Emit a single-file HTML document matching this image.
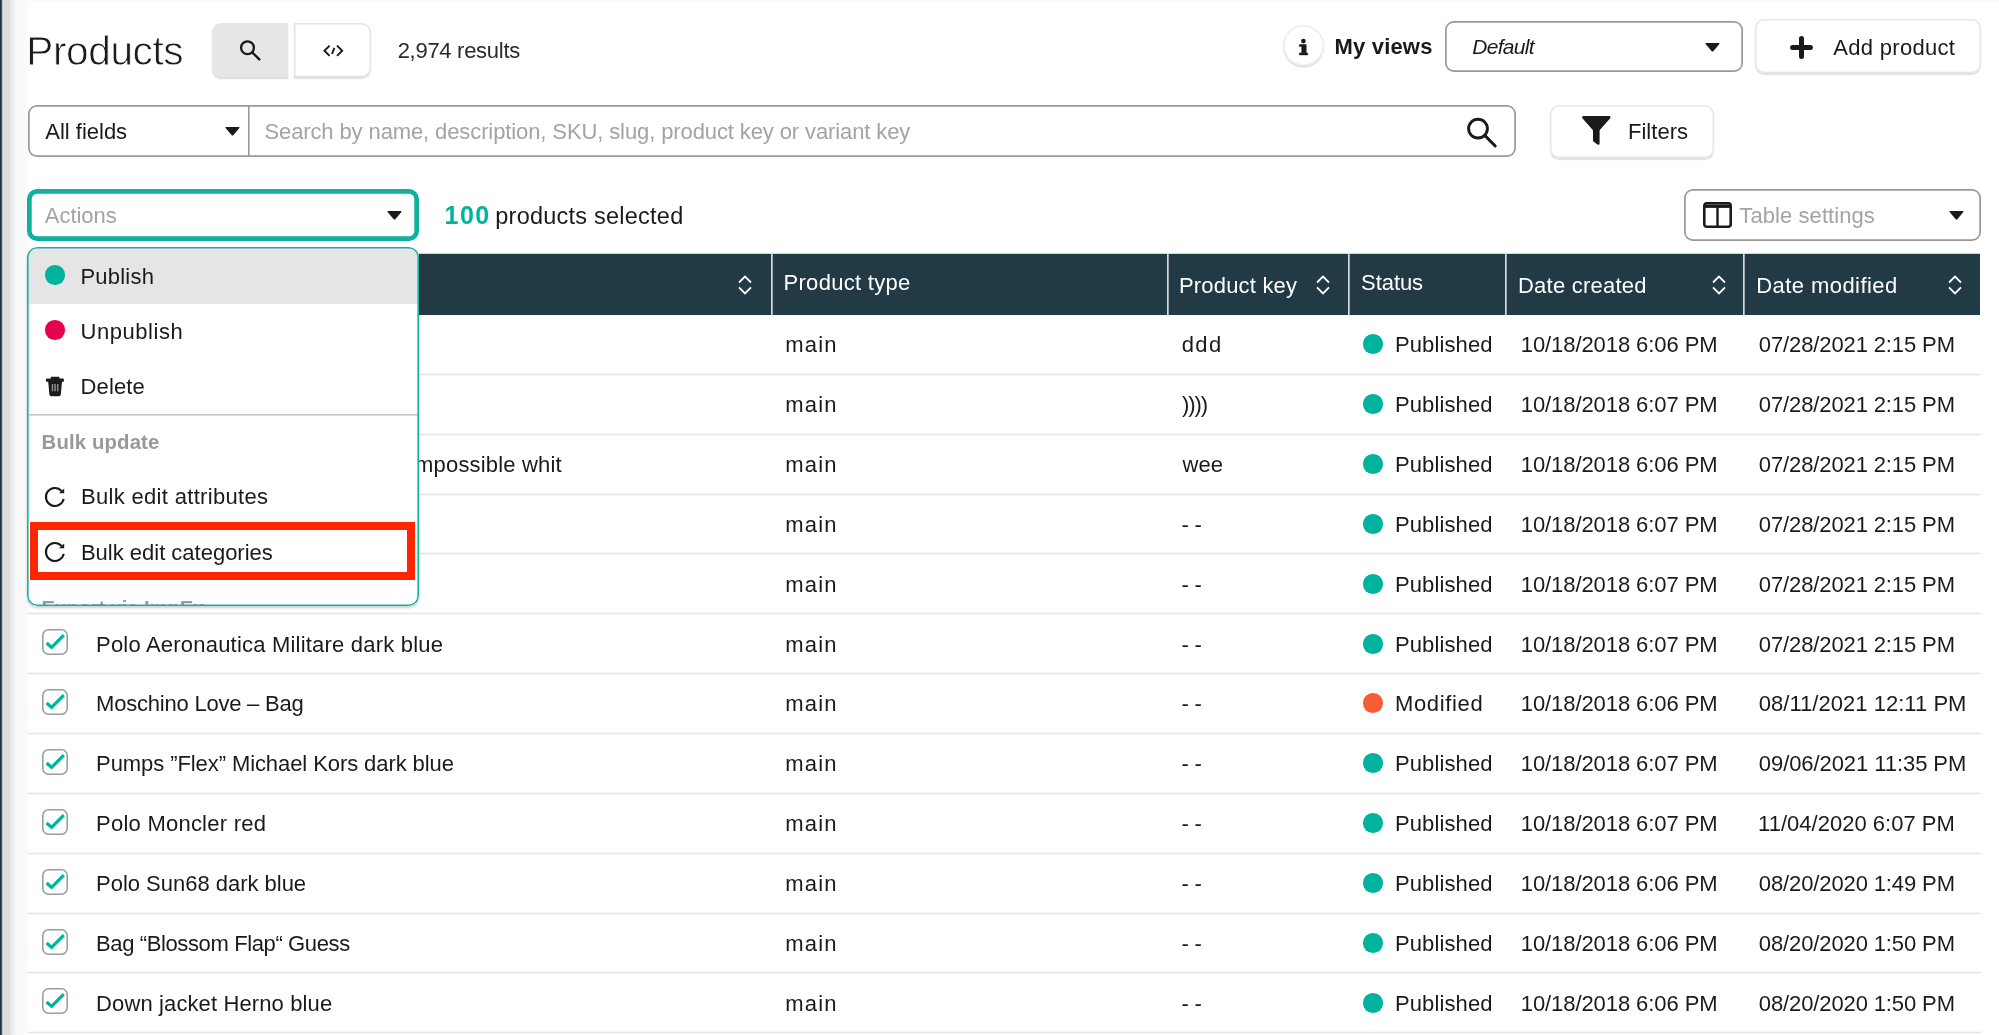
<!DOCTYPE html><html lang="en"><head><meta charset="utf-8"><title>Products</title><style>
*{box-sizing:border-box;margin:0;padding:0}
html,body{width:1999px;height:1035px;overflow:hidden;background:#fff}
body{position:relative;font-family:"Liberation Sans",sans-serif;color:#1a1a1a;font-size:22px}
div,nav,i,b{position:absolute;display:block}
#app{left:0;top:0;width:1999px;height:1035px;will-change:transform}
.t{position:absolute;white-space:nowrap;line-height:1;display:block;font-size:22px;font-weight:normal}
svg{position:absolute;overflow:visible}
.edge{left:0;top:0;width:30px;height:1035px;background:linear-gradient(90deg,#dcdcdc 0,#dddddd 9.5px,#e8e9e9 10.5px,#e9eaea 12.5px,#f2f2f2 13.5px,#f3f4f4 15.5px,#f9f9f9 16.5px,#fafafa 27px,#fff 29.5px)}
.edge:before{content:"";position:absolute;left:0;top:0;width:1px;height:100%;background:#1b3543;box-shadow:.75px 0 0 #1b3543,1.6px 0 0 #a9b2b6}
.topline{left:28px;top:0;right:0;height:1px;background:#fafafa}
.btn{background:#fff;border-radius:9px;box-shadow:inset 0 0 0 1.5px #e6e7e7,0 1.2px 1.2px rgba(0,0,0,.12)}
.sel{background:#fff;border-radius:9px;box-shadow:inset 0 0 0 1.7px #999}
.gray{color:#a3a3a3}
.b{font-weight:bold}
.i{font-style:italic}
.teal{color:#00b39e}
.w{color:#fff}
.thead{left:28px;top:254px;width:1952px;height:61px;background:#213a45;box-shadow:0 -.2px 0 #213a45}
.vsep{top:254px;width:1px;height:61px;background:#d3d8da;box-shadow:.7px 0 0 #d3d8da}
.hsep{left:27px;width:1954px;height:3px;background:#e5e7e7;border-top:1px solid #f6f7f7;border-bottom:1px solid #f6f7f7}
.cb{width:26px;height:26px;border-radius:6.5px;background:#fff;box-shadow:inset 0 0 0 1.6px #9d9d9d}
.dot{width:19.6px;height:19.6px;border-radius:50%}
.menu{left:27px;top:247px;width:392px;height:359px;background:#fff;border-radius:10px;box-shadow:0 2px 3px rgba(0,0,0,.2);overflow:hidden}
.menu>*{margin-left:-27px;margin-top:-247px}
.menu>.frame{margin:0;left:0;top:0;width:100%;height:100%;border-radius:10px;box-shadow:inset 0 0 0 1.6px #14b3a0}
</style></head><body>
<div id="app">
<div class="edge"></div><div class="topline"></div>
<header>
<h1 class="t" id="title" style="left:26.25px;top:31px;font-size:40.6px;letter-spacing:-0.390px;-webkit-text-stroke:.8px #fff;">Products</h1>
<div style="left:212px;top:23px;width:76px;height:54px;background:#e6e6e6;border-radius:9px 0 0 9px;box-shadow:0 1.5px 1.5px rgba(0,0,0,.14)"></div>
<svg style="left:236px;top:36px" width="28" height="28" viewBox="236 36 28 28"><circle cx="247.5" cy="47.7" r="6.4" fill="none" stroke="#1a1a1a" stroke-width="2.3"/><path d="M252.2 52.4L259.3 59.4" stroke="#1a1a1a" stroke-width="2.4" stroke-linecap="round"/></svg>
<div style="left:294px;top:23px;width:77px;height:54px;background:#fff;border-radius:0 9px 9px 0;box-shadow:inset 0 0 0 1.5px #e4e4e4,0 1.5px 1.5px rgba(0,0,0,.13)"></div>
<svg style="left:320px;top:40px" width="26" height="22" viewBox="320 40 26 22"><path d="M329.6 45.6L324.4 50.7L329.6 55.9M337 45.6L342.2 50.7L337 55.9M334.4 47.8L332 54" fill="none" stroke="#1a1a1a" stroke-width="1.9"/></svg>
<span class="t" id="results" style="left:397.66px;top:40px;letter-spacing:-0.284px;color:#2a2a2a">2,974 results</span>
<div style="left:1283px;top:25px;width:41px;height:41px;border-radius:50%;background:#fff;box-shadow:inset 0 0 0 1.5px #ebecec,0 1.2px 1.5px rgba(0,0,0,.18)"></div>
<svg style="left:1296px;top:36px" width="15" height="21" viewBox="1296 36 15 21" role="img" aria-label="i"><circle cx="1303.4" cy="41.1" r="2.35" fill="#1a1a1a"/><path d="M1299.4 44.5H1306.2V52.9H1307.7V54.9H1299.4V52.9H1301.7V46.4H1299.4Z" fill="#1a1a1a" stroke="#1a1a1a" stroke-width=".5" stroke-linejoin="round"/></svg>
<span class="t b" id="myviews" style="left:1334.54px;top:36px;letter-spacing:0.179px;">My views</span>
<div class="sel" style="left:1445px;top:21px;width:298px;height:51px;"></div>
<span class="t i" id="default" style="left:1472.37px;top:36px;font-size:21px;letter-spacing:-0.737px;">Default</span>
<svg style="left:1704.8px;top:43.2px" width="15" height="9" viewBox="0 0 15 9"><path d="M1.2 0H13.8Q15.3 0 14.2 1.2L8.3 8.2Q7.5 9 6.7 8.2L0.8 1.2Q-0.3 0 1.2 0Z" fill="#1a1a1a"/></svg>
<div class="btn" style="left:1755px;top:19px;width:226px;height:54px;"></div>
<svg style="left:1790.4px;top:35.6px" width="23" height="23" viewBox="0 0 23 23"><path d="M11.5 2.6V20.4M2.6 11.5H20.4" stroke="#1a1a1a" stroke-width="5" stroke-linecap="round"/></svg>
<span class="t" id="addproduct" style="left:1833.32px;top:37px;letter-spacing:0.292px;">Add product</span>
</header>
<section>
<div class="sel" style="left:28px;top:105px;width:1488px;height:51.5px;"></div>
<div style="left:248px;top:105px;width:1px;height:51.5px;background:#999;box-shadow:.6px 0 0 #999"></div>
<span class="t" id="allfields" style="left:45.32px;top:121px;letter-spacing:-0.015px;">All fields</span>
<svg style="left:225px;top:127.2px" width="15" height="9" viewBox="0 0 15 9"><path d="M1.2 0H13.8Q15.3 0 14.2 1.2L8.3 8.2Q7.5 9 6.7 8.2L0.8 1.2Q-0.3 0 1.2 0Z" fill="#1a1a1a"/></svg>
<span class="t gray" id="placeholder" style="left:264.44px;top:121px;letter-spacing:-0.109px;">Search by name, description, SKU, slug, product key or variant key</span>
<svg style="left:1464px;top:114px" width="36" height="36" viewBox="1464 114 36 36"><circle cx="1478" cy="128.6" r="9.4" fill="none" stroke="#1a1a1a" stroke-width="2.9"/><path d="M1485 135.6L1495.2 146" stroke="#1a1a1a" stroke-width="3" stroke-linecap="round"/></svg>
<div class="btn" style="left:1550px;top:105px;width:164px;height:53px;"></div>
<svg style="left:1582px;top:116px" width="28.6" height="29" viewBox="0 0 28.6 29"><path d="M1.6 0H27Q29.4 0.3 28 2.4L17.6 14.2V27.4Q17.4 29.6 15.4 28.4L11.4 25.4Q11 25 11 24.2V14.2L0.6 2.4Q-0.8 0.3 1.6 0Z" fill="#1a1a1a"/></svg>
<span class="t" id="filters" style="left:1627.94px;top:121px;letter-spacing:0.042px;">Filters</span>
</section>
<section>
<div style="left:27px;top:189px;width:392px;height:52px;border-radius:10px;background:#fff;box-shadow:inset 0 0 0 4.7px #0fb19c"></div>
<span class="t gray" id="actions" style="left:44.84px;top:205px;letter-spacing:-0.033px;">Actions</span>
<svg style="left:387.4px;top:211px" width="15" height="9" viewBox="0 0 15 9"><path d="M1.2 0H13.8Q15.3 0 14.2 1.2L8.3 8.2Q7.5 9 6.7 8.2L0.8 1.2Q-0.3 0 1.2 0Z" fill="#1a1a1a"/></svg>
<span class="t b teal" id="n100" style="left:444.60px;top:203px;font-size:25px;letter-spacing:1.407px;">100</span>
<span class="t" id="selected" style="left:495.31px;top:205px;font-size:23.5px;letter-spacing:0.234px;">products selected</span>
<div class="sel" style="left:1684px;top:189px;width:297px;height:52px;"></div>
<svg style="left:1703px;top:202.4px" width="29" height="26" viewBox="0 0 29 26"><rect x="1.3" y="1.3" width="26.4" height="23.4" rx="2.5" fill="none" stroke="#1a1a1a" stroke-width="2.6"/><path d="M1.3 4.2H27.7" stroke="#1a1a1a" stroke-width="3.4"/><path d="M14.5 3V24.7" stroke="#1a1a1a" stroke-width="2.4"/></svg>
<span class="t gray" id="tablesettings" style="left:1739.30px;top:205px;letter-spacing:0.080px;">Table settings</span>
<svg style="left:1949px;top:211.2px" width="15" height="9" viewBox="0 0 15 9"><path d="M1.2 0H13.8Q15.3 0 14.2 1.2L8.3 8.2Q7.5 9 6.7 8.2L0.8 1.2Q-0.3 0 1.2 0Z" fill="#1a1a1a"/></svg>
</section>
<main>
<div class="thead"></div>
<div class="vsep" style="left:770.5px"></div>
<div class="vsep" style="left:1166.5px"></div>
<div class="vsep" style="left:1347.5px"></div>
<div class="vsep" style="left:1505px"></div>
<div class="vsep" style="left:1742.5px"></div>
<div class="cb" style="left:42px;top:271px;width:26px;height:26px;"><svg style="left:3.6px;top:1.8px" width="20" height="18" viewBox="0 0 20 18"><path d="M0.6 12L5.6 16.4L17.8 4.2" fill="none" stroke="#00b39e" stroke-width="3.2"/></svg></div>
<span class="t w" id="h_name" style="left:95.54px;top:275px;letter-spacing:-0.277px;">Product name</span>
<svg style="left:736.4px;top:272.7px" width="18" height="24" viewBox="-9 -12 18 24"><path d="M-6 -2.5L0 -8.4L6 -2.5M-6 2.3L0 8.4L6 2.3" fill="none" stroke="#fff" stroke-width="1.8"/></svg>
<span class="t w" id="h_type" style="left:783.54px;top:272px;letter-spacing:0.294px;">Product type</span>
<span class="t w" id="h_key" style="left:1178.94px;top:275px;letter-spacing:0.192px;">Product key</span>
<svg style="left:1314.0px;top:272.7px" width="18" height="24" viewBox="-9 -12 18 24"><path d="M-6 -2.5L0 -8.4L6 -2.5M-6 2.3L0 8.4L6 2.3" fill="none" stroke="#fff" stroke-width="1.8"/></svg>
<span class="t w" id="h_status" style="left:1361.12px;top:272px;letter-spacing:-0.075px;">Status</span>
<span class="t w" id="h_created" style="left:1517.94px;top:275px;letter-spacing:0.244px;">Date created</span>
<svg style="left:1709.8px;top:272.7px" width="18" height="24" viewBox="-9 -12 18 24"><path d="M-6 -2.5L0 -8.4L6 -2.5M-6 2.3L0 8.4L6 2.3" fill="none" stroke="#fff" stroke-width="1.8"/></svg>
<span class="t w" id="h_modified" style="left:1756.30px;top:275px;letter-spacing:0.431px;">Date modified</span>
<svg style="left:1946.0px;top:272.7px" width="18" height="24" viewBox="-9 -12 18 24"><path d="M-6 -2.5L0 -8.4L6 -2.5M-6 2.3L0 8.4L6 2.3" fill="none" stroke="#fff" stroke-width="1.8"/></svg>
<div class="hsep" style="top:373px"></div>
<div class="cb" style="left:42px;top:330px;width:26px;height:26px;"><svg style="left:3.6px;top:1.8px" width="20" height="18" viewBox="0 0 20 18"><path d="M0.6 12L5.6 16.4L17.8 4.2" fill="none" stroke="#00b39e" stroke-width="3.2"/></svg></div>
<span class="t" id="name0" style="left:96.59px;top:334px;">Sweater Pinko white</span>
<span class="t" id="type0" style="left:785.30px;top:334px;letter-spacing:1.191px;">main</span>
<span class="t" id="key0" style="left:1181.67px;top:334px;letter-spacing:1.408px;">ddd</span>
<i class="dot" style="left:1363.4px;top:334.4px;background:#00b39e"></i>
<span class="t" id="stat0" style="left:1394.94px;top:334px;letter-spacing:0.125px;">Published</span>
<span class="t" id="dc0" style="left:1520.72px;top:334px;letter-spacing:-0.074px;">10/18/2018 6:06 PM</span>
<span class="t" id="dm0" style="left:1758.81px;top:334px;letter-spacing:-0.115px;">07/28/2021 2:15 PM</span>
<div class="hsep" style="top:433px"></div>
<div class="cb" style="left:42px;top:390px;width:26px;height:26px;"><svg style="left:3.6px;top:1.8px" width="20" height="18" viewBox="0 0 20 18"><path d="M0.6 12L5.6 16.4L17.8 4.2" fill="none" stroke="#00b39e" stroke-width="3.2"/></svg></div>
<span class="t" id="name1" style="left:96.59px;top:394px;">Sandals Aldo white</span>
<span class="t" id="type1" style="left:785.30px;top:394px;letter-spacing:1.191px;">main</span>
<span class="t" id="key1" style="left:1182.07px;top:394px;letter-spacing:-1.059px;">))))</span>
<i class="dot" style="left:1363.4px;top:394.4px;background:#00b39e"></i>
<span class="t" id="stat1" style="left:1394.94px;top:394px;letter-spacing:0.125px;">Published</span>
<span class="t" id="dc1" style="left:1520.72px;top:394px;letter-spacing:-0.074px;">10/18/2018 6:07 PM</span>
<span class="t" id="dm1" style="left:1758.81px;top:394px;letter-spacing:-0.115px;">07/28/2021 2:15 PM</span>
<div class="hsep" style="top:493px"></div>
<div class="cb" style="left:42px;top:450px;width:26px;height:26px;"><svg style="left:3.6px;top:1.8px" width="20" height="18" viewBox="0 0 20 18"><path d="M0.6 12L5.6 16.4L17.8 4.2" fill="none" stroke="#00b39e" stroke-width="3.2"/></svg></div>
<span class="t" id="name2" style="right:1437.23px;top:454px;letter-spacing:0.172px">Sneakers Mission Impossible whit</span>
<span class="t" id="type2" style="left:785.30px;top:454px;letter-spacing:1.191px;">main</span>
<span class="t" id="key2" style="left:1182.40px;top:454px;letter-spacing:0.112px;">wee</span>
<i class="dot" style="left:1363.4px;top:454.4px;background:#00b39e"></i>
<span class="t" id="stat2" style="left:1394.94px;top:454px;letter-spacing:0.125px;">Published</span>
<span class="t" id="dc2" style="left:1520.72px;top:454px;letter-spacing:-0.074px;">10/18/2018 6:06 PM</span>
<span class="t" id="dm2" style="left:1758.81px;top:454px;letter-spacing:-0.115px;">07/28/2021 2:15 PM</span>
<div class="hsep" style="top:552px"></div>
<div class="cb" style="left:42px;top:510px;width:26px;height:26px;"><svg style="left:3.6px;top:1.8px" width="20" height="18" viewBox="0 0 20 18"><path d="M0.6 12L5.6 16.4L17.8 4.2" fill="none" stroke="#00b39e" stroke-width="3.2"/></svg></div>
<span class="t" id="name3" style="left:96.06px;top:514px;">Bag Michael Kors beige</span>
<span class="t" id="type3" style="left:785.30px;top:514px;letter-spacing:1.191px;">main</span>
<span class="t" id="key3" style="left:1181.54px;top:514px;letter-spacing:-0.229px;">- -</span>
<i class="dot" style="left:1363.4px;top:514.4px;background:#00b39e"></i>
<span class="t" id="stat3" style="left:1394.94px;top:514px;letter-spacing:0.125px;">Published</span>
<span class="t" id="dc3" style="left:1520.72px;top:514px;letter-spacing:-0.074px;">10/18/2018 6:07 PM</span>
<span class="t" id="dm3" style="left:1758.81px;top:514px;letter-spacing:-0.115px;">07/28/2021 2:15 PM</span>
<div class="hsep" style="top:612px"></div>
<div class="cb" style="left:42px;top:569px;width:26px;height:26px;"><svg style="left:3.6px;top:1.8px" width="20" height="18" viewBox="0 0 20 18"><path d="M0.6 12L5.6 16.4L17.8 4.2" fill="none" stroke="#00b39e" stroke-width="3.2"/></svg></div>
<span class="t" id="name4" style="left:96.59px;top:574px;">Shirt Aglini white</span>
<span class="t" id="type4" style="left:785.30px;top:574px;letter-spacing:1.191px;">main</span>
<span class="t" id="key4" style="left:1181.54px;top:574px;letter-spacing:-0.229px;">- -</span>
<i class="dot" style="left:1363.4px;top:574.4px;background:#00b39e"></i>
<span class="t" id="stat4" style="left:1394.94px;top:574px;letter-spacing:0.125px;">Published</span>
<span class="t" id="dc4" style="left:1520.72px;top:574px;letter-spacing:-0.074px;">10/18/2018 6:07 PM</span>
<span class="t" id="dm4" style="left:1758.81px;top:574px;letter-spacing:-0.115px;">07/28/2021 2:15 PM</span>
<div class="hsep" style="top:672px"></div>
<div class="cb" style="left:42px;top:629px;width:26px;height:26px;"><svg style="left:3.6px;top:1.8px" width="20" height="18" viewBox="0 0 20 18"><path d="M0.6 12L5.6 16.4L17.8 4.2" fill="none" stroke="#00b39e" stroke-width="3.2"/></svg></div>
<span class="t" id="name5" style="left:96.06px;top:634px;letter-spacing:0.203px;">Polo Aeronautica Militare dark blue</span>
<span class="t" id="type5" style="left:785.30px;top:634px;letter-spacing:1.191px;">main</span>
<span class="t" id="key5" style="left:1181.54px;top:634px;letter-spacing:-0.229px;">- -</span>
<i class="dot" style="left:1363.4px;top:634.4px;background:#00b39e"></i>
<span class="t" id="stat5" style="left:1394.94px;top:634px;letter-spacing:0.125px;">Published</span>
<span class="t" id="dc5" style="left:1520.72px;top:634px;letter-spacing:-0.074px;">10/18/2018 6:07 PM</span>
<span class="t" id="dm5" style="left:1758.81px;top:634px;letter-spacing:-0.115px;">07/28/2021 2:15 PM</span>
<div class="hsep" style="top:732px"></div>
<div class="cb" style="left:42px;top:689px;width:26px;height:26px;"><svg style="left:3.6px;top:1.8px" width="20" height="18" viewBox="0 0 20 18"><path d="M0.6 12L5.6 16.4L17.8 4.2" fill="none" stroke="#00b39e" stroke-width="3.2"/></svg></div>
<span class="t" id="name6" style="left:96.06px;top:693px;letter-spacing:-0.215px;">Moschino Love – Bag</span>
<span class="t" id="type6" style="left:785.30px;top:693px;letter-spacing:1.191px;">main</span>
<span class="t" id="key6" style="left:1181.54px;top:693px;letter-spacing:-0.229px;">- -</span>
<i class="dot" style="left:1363.4px;top:693.4px;background:#f85d35"></i>
<span class="t" id="stat6" style="left:1394.94px;top:693px;letter-spacing:0.646px;">Modified</span>
<span class="t" id="dc6" style="left:1520.72px;top:693px;letter-spacing:-0.074px;">10/18/2018 6:06 PM</span>
<span class="t" id="dm6" style="left:1758.81px;top:693px;letter-spacing:0.029px;">08/11/2021 12:11 PM</span>
<div class="hsep" style="top:792px"></div>
<div class="cb" style="left:42px;top:749px;width:26px;height:26px;"><svg style="left:3.6px;top:1.8px" width="20" height="18" viewBox="0 0 20 18"><path d="M0.6 12L5.6 16.4L17.8 4.2" fill="none" stroke="#00b39e" stroke-width="3.2"/></svg></div>
<span class="t" id="name7" style="left:96.06px;top:753px;letter-spacing:-0.081px;">Pumps ”Flex” Michael Kors dark blue</span>
<span class="t" id="type7" style="left:785.30px;top:753px;letter-spacing:1.191px;">main</span>
<span class="t" id="key7" style="left:1181.54px;top:753px;letter-spacing:-0.229px;">- -</span>
<i class="dot" style="left:1363.4px;top:753.4px;background:#00b39e"></i>
<span class="t" id="stat7" style="left:1394.94px;top:753px;letter-spacing:0.125px;">Published</span>
<span class="t" id="dc7" style="left:1520.72px;top:753px;letter-spacing:-0.074px;">10/18/2018 6:07 PM</span>
<span class="t" id="dm7" style="left:1758.81px;top:753px;letter-spacing:-0.071px;">09/06/2021 11:35 PM</span>
<div class="hsep" style="top:852px"></div>
<div class="cb" style="left:42px;top:809px;width:26px;height:26px;"><svg style="left:3.6px;top:1.8px" width="20" height="18" viewBox="0 0 20 18"><path d="M0.6 12L5.6 16.4L17.8 4.2" fill="none" stroke="#00b39e" stroke-width="3.2"/></svg></div>
<span class="t" id="name8" style="left:96.06px;top:813px;letter-spacing:0.237px;">Polo Moncler red</span>
<span class="t" id="type8" style="left:785.30px;top:813px;letter-spacing:1.191px;">main</span>
<span class="t" id="key8" style="left:1181.54px;top:813px;letter-spacing:-0.229px;">- -</span>
<i class="dot" style="left:1363.4px;top:813.4px;background:#00b39e"></i>
<span class="t" id="stat8" style="left:1394.94px;top:813px;letter-spacing:0.125px;">Published</span>
<span class="t" id="dc8" style="left:1520.72px;top:813px;letter-spacing:-0.074px;">10/18/2018 6:07 PM</span>
<span class="t" id="dm8" style="left:1758.06px;top:813px;letter-spacing:0.019px;">11/04/2020 6:07 PM</span>
<div class="hsep" style="top:912px"></div>
<div class="cb" style="left:42px;top:869px;width:26px;height:26px;"><svg style="left:3.6px;top:1.8px" width="20" height="18" viewBox="0 0 20 18"><path d="M0.6 12L5.6 16.4L17.8 4.2" fill="none" stroke="#00b39e" stroke-width="3.2"/></svg></div>
<span class="t" id="name9" style="left:96.06px;top:873px;letter-spacing:-0.018px;">Polo Sun68 dark blue</span>
<span class="t" id="type9" style="left:785.30px;top:873px;letter-spacing:1.191px;">main</span>
<span class="t" id="key9" style="left:1181.54px;top:873px;letter-spacing:-0.229px;">- -</span>
<i class="dot" style="left:1363.4px;top:873.4px;background:#00b39e"></i>
<span class="t" id="stat9" style="left:1394.94px;top:873px;letter-spacing:0.125px;">Published</span>
<span class="t" id="dc9" style="left:1520.72px;top:873px;letter-spacing:-0.074px;">10/18/2018 6:06 PM</span>
<span class="t" id="dm9" style="left:1758.81px;top:873px;letter-spacing:-0.115px;">08/20/2020 1:49 PM</span>
<div class="hsep" style="top:971px"></div>
<div class="cb" style="left:42px;top:929px;width:26px;height:26px;"><svg style="left:3.6px;top:1.8px" width="20" height="18" viewBox="0 0 20 18"><path d="M0.6 12L5.6 16.4L17.8 4.2" fill="none" stroke="#00b39e" stroke-width="3.2"/></svg></div>
<span class="t" id="name10" style="left:96.06px;top:933px;letter-spacing:-0.382px;">Bag “Blossom Flap“ Guess</span>
<span class="t" id="type10" style="left:785.30px;top:933px;letter-spacing:1.191px;">main</span>
<span class="t" id="key10" style="left:1181.54px;top:933px;letter-spacing:-0.229px;">- -</span>
<i class="dot" style="left:1363.4px;top:933.4px;background:#00b39e"></i>
<span class="t" id="stat10" style="left:1394.94px;top:933px;letter-spacing:0.125px;">Published</span>
<span class="t" id="dc10" style="left:1520.72px;top:933px;letter-spacing:-0.074px;">10/18/2018 6:06 PM</span>
<span class="t" id="dm10" style="left:1758.81px;top:933px;letter-spacing:-0.115px;">08/20/2020 1:50 PM</span>
<div class="hsep" style="top:1031px"></div>
<div class="cb" style="left:42px;top:988px;width:26px;height:26px;"><svg style="left:3.6px;top:1.8px" width="20" height="18" viewBox="0 0 20 18"><path d="M0.6 12L5.6 16.4L17.8 4.2" fill="none" stroke="#00b39e" stroke-width="3.2"/></svg></div>
<span class="t" id="name11" style="left:96.06px;top:993px;letter-spacing:0.121px;">Down jacket Herno blue</span>
<span class="t" id="type11" style="left:785.30px;top:993px;letter-spacing:1.191px;">main</span>
<span class="t" id="key11" style="left:1181.54px;top:993px;letter-spacing:-0.229px;">- -</span>
<i class="dot" style="left:1363.4px;top:993.4px;background:#00b39e"></i>
<span class="t" id="stat11" style="left:1394.94px;top:993px;letter-spacing:0.125px;">Published</span>
<span class="t" id="dc11" style="left:1520.72px;top:993px;letter-spacing:-0.074px;">10/18/2018 6:06 PM</span>
<span class="t" id="dm11" style="left:1758.81px;top:993px;letter-spacing:-0.115px;">08/20/2020 1:50 PM</span>
</main>
<nav class="menu">
<div style="left:27px;top:247px;width:392px;height:57px;background:#e5e5e5"></div>
<i class="dot" style="left:45.2px;top:265.2px;background:#00b39e"></i>
<span class="t" id="m_publish" style="left:80.39px;top:266px;letter-spacing:0.226px;">Publish</span>
<i class="dot" style="left:45.2px;top:320px;background:#e60050"></i>
<span class="t" id="m_unpublish" style="left:80.52px;top:321px;letter-spacing:0.549px;">Unpublish</span>
<svg style="left:45px;top:376px" width="20" height="21" viewBox="45 376 20 21"><path d="M51.4 376.8H58.8Q59.4 376.8 59.4 377.6V378.5H62.9Q63.9 378.5 63.9 379.5V380.9Q63.9 381.8 62.9 381.8H62L60.8 394.6Q60.6 396.2 59 396.2H51.2Q49.6 396.2 49.4 394.6L48.2 381.8H47Q46 381.8 46 380.9V379.5Q46 378.5 47 378.5H50.8V377.6Q50.8 376.8 51.4 376.8Z" fill="#1a1a1a"/><path d="M52.5 384V391.3M55.1 384V391.3M57.7 384V391.3" stroke="#8a8d8e" stroke-width="1.5"/></svg>
<span class="t" id="m_delete" style="left:80.60px;top:376px;letter-spacing:0.112px;">Delete</span>
<div style="left:27px;top:414px;width:392px;height:1px;background:#c6c6c6;box-shadow:0 .6px 0 #c6c6c6"></div>
<span class="t b" id="m_bulk" style="left:41.58px;top:432px;font-size:20.3px;letter-spacing:0.168px;color:#999">Bulk update</span>
<svg style="left:43px;top:484.8px" width="24" height="24" viewBox="43 484.8 24 24"><path d="M61.59 490.78A9 9 0 1 0 63.70 498.67" fill="none" stroke="#1a1a1a" stroke-width="2.1"/><path d="M64.20 488.20v4.9h-5.2z" fill="#1a1a1a"/></svg>
<span class="t" id="m_attr" style="left:80.92px;top:486px;letter-spacing:0.326px;">Bulk edit attributes</span>
<svg style="left:43px;top:539.8px" width="24" height="24" viewBox="43 539.8 24 24"><path d="M61.59 545.78A9 9 0 1 0 63.70 553.67" fill="none" stroke="#1a1a1a" stroke-width="2.1"/><path d="M64.20 543.20v4.9h-5.2z" fill="#1a1a1a"/></svg>
<span class="t" id="m_cat" style="left:80.92px;top:542px;letter-spacing:-0.005px;">Bulk edit categories</span>
<div style="left:30px;top:522px;width:385px;height:58px;border:8px solid #ff2600"></div>
<span class="t b" id="m_export" style="left:41.58px;top:598px;font-size:20.3px;letter-spacing:-0.119px;color:#999">Export via ImpEx</span>
<div class="frame"></div>
</nav>
</div>
</body></html>
